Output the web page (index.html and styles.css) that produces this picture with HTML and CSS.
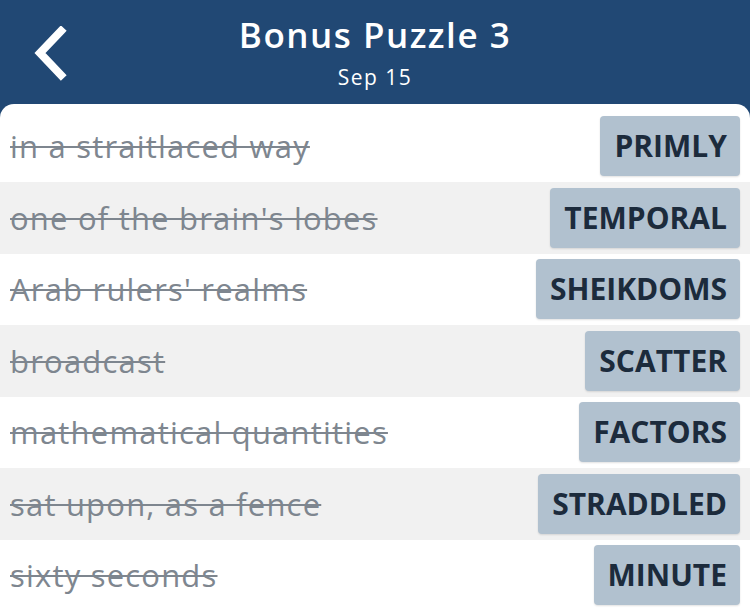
FILE: index.html
```html
<!DOCTYPE html>
<html>
<head>
	<title>Bonus Puzzle 3</title>
	<meta charset="utf-8">
	<meta name="viewport" content="width=device-width, initial-scale=1">
	<link rel="stylesheet" href="styles.css">
</head>
<body>
    <div class="header">
        <a class="back" href="#">
            <svg width="40" height="56" viewBox="0 0 40 56">
                <path d="M29 5 L8 27 L29 49" fill="none" stroke="#fff" stroke-width="8" stroke-linecap="square"/>
            </svg>
        </a>
        <div class="title">
            <h1>Bonus Puzzle 3</h1>
            <p>Sep 15</p>
        </div>
    </div>

    <div class="panel">
        <div class="row">
            <span class="clue">in a straitlaced way</span>
            <span class="answer">PRIMLY</span>
        </div>
        <div class="row">
            <span class="clue">one of the brain's lobes</span>
            <span class="answer">TEMPORAL</span>
        </div>
        <div class="row">
            <span class="clue">Arab rulers' realms</span>
            <span class="answer">SHEIKDOMS</span>
        </div>
        <div class="row">
            <span class="clue">broadcast</span>
            <span class="answer">SCATTER</span>
        </div>
        <div class="row">
            <span class="clue">mathematical quantities</span>
            <span class="answer">FACTORS</span>
        </div>
        <div class="row">
            <span class="clue">sat upon, as a fence</span>
            <span class="answer">STRADDLED</span>
        </div>
        <div class="row">
            <span class="clue">sixty seconds</span>
            <span class="answer">MINUTE</span>
        </div>
    </div>
</body>
</html>
```

FILE: styles.css
```css
body {
	font-family: "Open Sans", "Noto Sans", sans-serif;
	background-color: #214874;
	margin: 0;
	padding: 0;
	height: 610px;
	overflow: hidden;
}
.header {
	position: relative;
	height: 104px;
	display: flex;
	justify-content: center;
	align-items: flex-start;
}
.back {
	position: absolute;
	left: 32px;
	top: 26px;
}
.title {
	text-align: center;
	color: #fff;
	padding-top: 11px;
}
.title h1 {
	font-size: 35px;
	font-weight: 600;
	letter-spacing: 1.5px;
	margin: 0;
	line-height: 48px;
}
.title p {
	font-size: 21px;
	letter-spacing: 1.5px;
	margin: 0;
	line-height: 36px;
}
.panel {
	background-color: #fff;
	border-radius: 14px 14px 0 0;
	padding-top: 6.5px;
	height: 520px;
}
.row {
	height: 71.5px;
	display: flex;
	justify-content: space-between;
	align-items: center;
	padding: 0 10px;
}
.row:nth-child(even) {
	background-color: #f1f1f1;
}
.clue {
	font-size: 31px;
	letter-spacing: 1.2px;
	color: #7e868f;
	text-decoration: line-through;
	text-decoration-thickness: 2px;
}
.answer {
	background-color: #b1c1cf;
	color: #1c2b3c;
	font-size: 30px;
	font-weight: 700;
	height: 60px;
	line-height: 60px;
	padding: 0 13px 0 14px;
	border-radius: 4px;
	box-shadow: 0 1px 2px rgba(0, 0, 0, 0.12);
}
```
